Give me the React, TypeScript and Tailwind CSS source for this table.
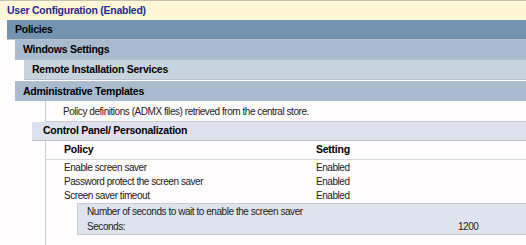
const font = { fontFamily: '"Liberation Sans", Arial, sans-serif' };

function Header({ indent, bg, label }: { indent: string; bg: string; label: string }) {
  return (
    <div className={`${indent} ${bg} h-[20px] flex items-center pl-[8px] font-bold text-[10.5px] tracking-[-0.25px] text-black border-b border-[#b9bfca]`}>
      {label}
    </div>
  );
}

function PolicyRow({ name, value }: { name: string; value: string }) {
  return (
    <div className="h-[14px] flex items-center text-[10px] tracking-[-0.45px] text-[#222]">
      <div className="w-[270px] pl-[18px]">{name}</div>
      <div>{value}</div>
    </div>
  );
}

export default function App() {
  return (
    <div className="w-[526px] h-[245px] overflow-hidden bg-[#fefcfd]" style={font}>
      <div className="h-[20px] bg-[#fff6d7] border-t border-[#c9c2b3] flex items-center pl-[7px] font-bold text-[10.5px] tracking-[-0.25px] text-[#2a2a8e]">
        User Configuration (Enabled)
      </div>
      <Header indent="ml-[7px]" bg="bg-[#7393b1]" label="Policies" />
      <Header indent="ml-[15px]" bg="bg-[#a8bbcf]" label="Windows Settings" />
      <Header indent="ml-[24px]" bg="bg-[#c7d3df]" label="Remote Installation Services" />
      <div className="h-[1px]" />
      <div className="ml-[15px] h-[20px] bg-[#a8bbcf] border-t border-[#b9bfca] flex items-center pl-[8px] font-bold text-[10.5px] tracking-[-0.25px] text-black">
        Administrative Templates
      </div>
      <div className="ml-[45px] h-[21px] border-l border-b border-[#c9cbd2] flex items-center pl-[17px] text-[10px] tracking-[-0.45px] text-[#222]">
        Policy definitions (ADMX files) retrieved from the central store.
      </div>
      <div className="ml-[32px] h-[19px] bg-[#dde1ee] border-b border-[#c1c4cc] flex items-center pl-[11px] font-bold text-[10.5px] tracking-[-0.25px] text-black">
        Control Panel/ Personalization
      </div>
      <div className="ml-[45px] border-l border-[#c9cbd2] h-[110px]">
        <div className="h-[19px] flex items-center border-b border-[#d3d3d8] font-bold text-[10.5px] tracking-[-0.25px] text-black">
          <div className="w-[270px] pl-[18px]">Policy</div>
          <div>Setting</div>
        </div>
        <div>
          <PolicyRow name="Enable screen saver" value="Enabled" />
          <PolicyRow name="Password protect the screen saver" value="Enabled" />
          <PolicyRow name="Screen saver timeout" value="Enabled" />
        </div>
        <div className="ml-[31px] mt-[1px] bg-[#dfe3ee] border-t border-b border-l border-[#c6cad4] text-[10px] tracking-[-0.45px] text-[#222]">
          <div className="h-[15px] flex items-center pl-[9px]">Number of seconds to wait to enable the screen saver</div>
          <div className="h-[15px] flex items-center pl-[9px]">
            <div className="w-[371px]">Seconds:</div>
            <div>1200</div>
          </div>
        </div>
      </div>
    </div>
  );
}
